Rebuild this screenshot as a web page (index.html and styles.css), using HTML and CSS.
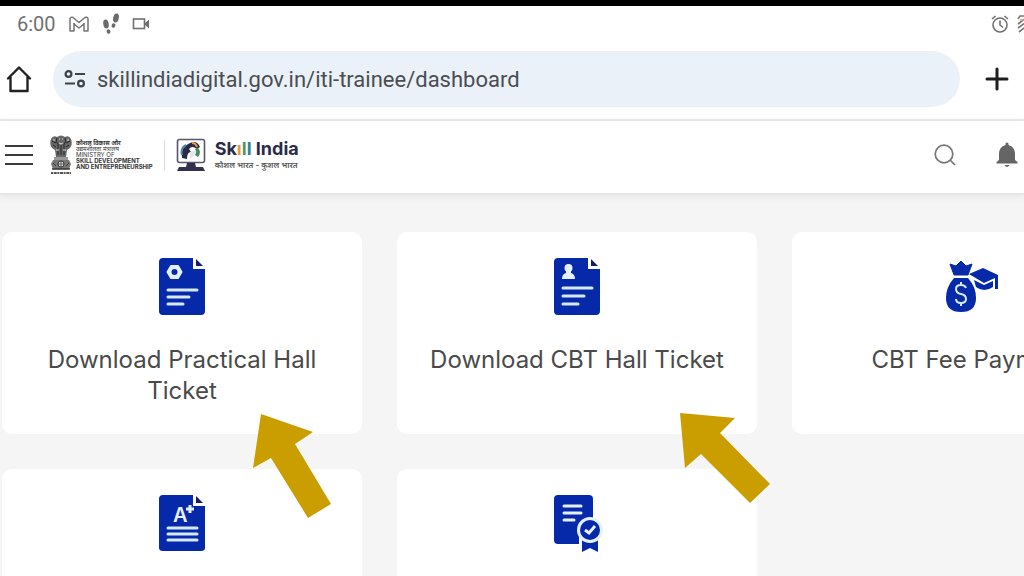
FILE: index.html
```html
<!DOCTYPE html>
<html lang="en">
<head>
    <meta charset="utf-8">
    <meta name="viewport" content="width=device-width, initial-scale=1">
    <title>ITI Trainee Dashboard</title>
    <link rel="stylesheet" href="styles.css">
</head>

<body>
    <div class="status-bar">
        <span class="clock">6:00</span>
        <svg class="mail" width="22" height="18" viewBox="0 0 22 18" fill="none" stroke="#757575" stroke-width="1.5" stroke-linejoin="round"><path d="M2 16V3.5Q3 1.5 5 2.5L11 7.5L17 2.5Q19 1.5 20 3.5V16H16V9L11 13L6 9V16Z"/><path d="M6 8V9M16 8V9"/></svg>
        <svg class="steps" width="18" height="22" viewBox="0 0 18 22" fill="#6b6b6b"><ellipse cx="4" cy="11" rx="2.700" ry="4.500" transform="rotate(-10 4 11)"/><ellipse cx="6.500" cy="18.500" rx="1.900" ry="2.300" transform="rotate(-15 6.500 18.500)"/><ellipse cx="14" cy="5" rx="2.800" ry="4.500" transform="rotate(12 14 5)"/><ellipse cx="11.500" cy="12.500" rx="1.900" ry="2.300" transform="rotate(15 11.500 12.500)"/></svg>
        <svg class="video" width="18" height="12" viewBox="0 0 18 12"><rect x="1.500" y="1" width="11" height="9.500" fill="none" stroke="#707070" stroke-width="1.600"/><path d="M13 5L17 1.500V10.500L13 7Z" fill="#707070"/></svg>
        <svg class="alarm" width="18" height="18" viewBox="0 0 18 18" fill="none" stroke="#707070" stroke-width="1.600"><circle cx="9" cy="10" r="7"/><path d="M9 5.500V10L12 12.500M1 4L4.500 1M17 4L13.500 1"/></svg>
        <svg class="signal" width="18" height="18" viewBox="0 0 18 18" fill="none" stroke="#777" stroke-width="1.600"><path d="M1 4L3 1H9M1 9L9 3M1 13L12 5M2 17L16 6M8 17L17 11"/><path d="M3 5L9 5" stroke="#c9a58f"/></svg>
    </div>

    <div class="address-bar">
        <button type="button" class="icon-btn" aria-label="Home">
            <svg width="26" height="28" viewBox="0 0 26 28" fill="none" stroke="#222" stroke-width="2.400" stroke-linejoin="round" stroke-linecap="round"><path d="M2 13.500L13 2.500L24 13.500M4.500 12V26H21.500V12"/></svg>
        </button>
        <div class="url-box">
            <svg width="22" height="18" viewBox="0 0 22 18" fill="none" stroke="#3f4347" stroke-width="2.200"><circle cx="4.500" cy="4" r="2.900"/><path d="M11 4H21M1 13.500H11"/><circle cx="17" cy="13.500" r="2.900"/></svg>
            <input type="text" class="url" aria-label="Address" value="skillindiadigital.gov.in/iti-trainee/dashboard">
        </div>
        <button type="button" class="icon-btn" aria-label="New tab">
            <svg width="24" height="24" viewBox="0 0 24 24" stroke="#1d1d1d" stroke-width="3" stroke-linecap="round"><path d="M12 2V22M2 12H22"/></svg>
        </button>
    </div>

    <header class="site-header">
        <button type="button" class="icon-btn" aria-label="Menu">
            <svg width="28" height="22" viewBox="0 0 28 22" stroke="#3c3c3c" stroke-width="2.200"><path d="M0 2H28M0 11H28M0 20H28"/></svg>
        </button>
        <a href="#" class="ministry">
            <svg width="24" height="40" viewBox="0 0 24 40">
                <path d="M2 4Q4 0 8 2Q12 -1 16 2Q20 0 22 4Q24 9 21 13L18 15L17 22H7L6 15L3 13Q0 9 2 4Z" fill="#686868"/>
                <path d="M8 3Q6 7 9 9V20M16 3Q18 7 15 9V20M3 6L7 8M21 6L17 8M4 10L7 12M20 10L17 12M12 10V20" stroke="#222" fill="none"/>
                <path d="M10 4H11M13 4H14M10 8Q12 10 14 8M5 4V6M19 4V6M7 15H10M14 15H17" stroke="#ddd" fill="none"/>
                <path d="M5 22H19V25H5Z" fill="#999"/>
                <path d="M4 25H20L22 29L20 34H4L2 29Z" fill="#777"/>
                <circle cx="12" cy="29" r="3" fill="#eee" stroke="#333"/>
                <path d="M12 26V32M9 29H15M4 28L7 31M20 28L17 31" stroke="#333" stroke-width=".8"/>
                <path d="M3 34H21" stroke="#333" stroke-width="1.500"/>
                <path d="M2 38H22" stroke="#555" stroke-width="2" stroke-dasharray="2 .7 3 .6"/>
            </svg>
            <span class="ministry-name">
                <b>कौशल विकास और</b>
                <span>उद्यमशीलता मंत्रालय</span>
                <span>MINISTRY OF</span>
                <b>SKILL DEVELOPMENT</b>
                <b>AND ENTREPRENEURSHIP</b>
            </span>
        </a>
        <a href="#" class="skill-india">
            <svg width="30" height="34" viewBox="0 0 30 34">
                <rect x="1.500" y="1.500" width="27" height="23" rx="2" fill="#fff" stroke="#57566b" stroke-width="1.600"/>
                <path d="M6 20Q4 9 14 5Q21 2 24 9L21 11Q16 7 13 11L15 14Q11 14 11 21Z" fill="#292c49"/>
                <path d="M6 17Q4 10 10 7" fill="none" stroke="#4d89ad" stroke-width="2"/>
                <path d="M16 5Q20 5 21 9" fill="none" stroke="#e69b42" stroke-width="2"/>
                <path d="M22 10Q26 14 22 19L19 17Q21 14 19 11Z" fill="#458b5c"/>
                <path d="M14 14L20 12L18 18L14 21Z" fill="#e4e4ee"/>
                <path d="M11 25H19L20 29H27L29 33H1L3 29H10Z" fill="#32304f"/>
            </svg>
            <span class="brand">
                <span class="brand-name">Sk<span class="orange">ı</span><span class="green">l</span><span class="teal">l</span> India</span>
                <span class="brand-hindi">कौशल भारत - कुशल भारत</span>
            </span>
        </a>
        <div class="header-actions">
            <button type="button" class="icon-btn" aria-label="Search">
                <svg width="22" height="22" viewBox="0 0 22 22" fill="none" stroke="#777" stroke-width="1.700"><circle cx="10" cy="10" r="8.800"/><path d="M16 16L21 21"/></svg>
            </button>
            <button type="button" class="icon-btn" aria-label="Notifications">
                <svg width="22" height="26" viewBox="0 0 22 26" fill="#656565"><path d="M9.500 3V1.500Q11 -.5 12.500 1.500V3Q19 5 19 12V18L21.500 20V21.500H.5V20L3 18V12Q3 5 9.500 3ZM8.500 23H13.500Q11 27 8.500 23Z"/></svg>
            </button>
        </div>
    </header>

    <main class="dashboard">
        <a href="#" class="card">
            <svg width="46" height="58" viewBox="0 0 46 58">
                <path d="M4 0H34V11H46V53Q46 57 42 57H4Q0 57 0 53V4Q0 0 4 0Z" fill="#0629a9"/>
                <path d="M37 1V8H44Z" fill="#171c66"/>
                <path d="M12 8H19L22.500 14L19 20H12L8.500 14Z" fill="#e6f1ff" stroke="#e6f1ff" stroke-width="2" stroke-linejoin="round"/>
                <circle cx="15.500" cy="14" r="3" fill="#0629a9"/>
                <path d="M9 32H38M9 39H30M9 46H24" stroke="#d6e9ff" stroke-width="3" stroke-linecap="round"/>
            </svg>
            <h2>Download Practical Hall Ticket</h2>
            <!-- pointer arrow -->
            <svg class="arrow arrow-left" width="80" height="106" viewBox="0 0 80 106"><path d="M9 1L61 19L43 31L79 91L56 105L19 45L1 55Z" fill="#cb9e00"/></svg>
        </a>
        <a href="#" class="card">
            <svg width="46" height="58" viewBox="0 0 46 58">
                <path d="M4 0H34V11H46V53Q46 57 42 57H4Q0 57 0 53V4Q0 0 4 0Z" fill="#0629a9"/>
                <path d="M37 1V8H44Z" fill="#171c66"/>
                <circle cx="14.500" cy="10" r="4" fill="#e6f1ff"/>
                <path d="M12 12H17V15Q21 16 21 21H8Q8 16 12 15Z" fill="#e6f1ff"/>
                <path d="M9 30H38M9 38H30M9 46H24" stroke="#d6e9ff" stroke-width="3" stroke-linecap="round"/>
            </svg>
            <h2>Download CBT Hall Ticket</h2>
            <svg class="arrow arrow-right" width="92" height="92" viewBox="0 0 92 92"><path d="M1 1L56 6L41 21L91 72L71 91L22 42L6 56Z" fill="#cb9e00"/></svg>
        </a>
        <a href="#" class="card">
            <svg width="52" height="58" viewBox="0 0 52 58">
                <path d="M4 6L10 8L15 3L20 8L26 6L22 17H8Z" fill="#0629a9" stroke="#0629a9" stroke-linejoin="round"/>
                <path d="M8 20H22Q30 29 30 40Q30 54 15 54Q0 54 0 40Q0 29 8 20Z" fill="#0629a9"/>
                <path d="M20 30Q19 27 15 27Q10 27 10 31Q10 35 15 36Q20 37 20 41Q20 45 15 45Q10 45 10 41M15 24V27M15 45V48" fill="none" stroke="#d6e9ff" stroke-width="2"/>
                <path d="M23 16L37 10L52 17V31H49V20L38 25Z" fill="#0629a9"/>
                <path d="M28 22L38 27L47 23V29Q38 35 30 29Z" fill="#0629a9"/>
            </svg>
            <h2>CBT Fee Payment</h2>
        </a>
        <a href="#" class="card" aria-label="Results">
            <svg width="46" height="58" viewBox="0 0 46 58">
                <path d="M4 0H34V11H46V53Q46 56 42 56H4Q0 56 0 53V4Q0 0 4 0Z" fill="#0629a9"/>
                <path d="M37 1V8H44Z" fill="#171c66"/>
                <text class="grade" x="14" y="27">A</text>
                <path d="M31 10V18M27 14H35" stroke="#e6f1ff" stroke-width="3"/>
                <path d="M9 33H38M9 39H38M9 45H38" stroke="#d6e9ff" stroke-width="3" stroke-linecap="round"/>
            </svg>
        </a>
        <a href="#" class="card" aria-label="Certificates">
            <svg width="46" height="58" viewBox="0 0 46 58">
                <path d="M4 0H35Q39 0 39 4V49H4Q0 49 0 45V4Q0 0 4 0Z" fill="#0629a9"/>
                <path d="M10 11H27M10 18H27M10 25H20" stroke="#e6f1ff" stroke-width="3" stroke-linecap="round"/>
                <path d="M25 42H46V59H25Z" fill="#fff"/>
                <path d="M28 45H44V57L36 53L28 57Z" fill="#0629a9"/>
                <circle cx="36" cy="35" r="13" fill="#e6f1ff"/>
                <circle cx="36" cy="35" r="10" fill="#0629a9"/>
                <path d="M31 35L35 38L41 31" fill="none" stroke="#e6f1ff" stroke-width="3"/>
            </svg>
        </a>
    </main>
</body>
</html>
```

FILE: styles.css
```css
* {
    box-sizing: border-box;
}
body {
    margin: 0;
    background-color: #f5f5f5;
    border-top: 6px solid #000;
    font-family: Inter, "Noto Sans", sans-serif;
    color: #444;
    overflow: hidden;
}
svg {
    flex-shrink: 0;
    overflow: visible;
}
a {
    color: inherit;
    text-decoration: none;
}

/* Phone status bar */
.status-bar {
    display: flex;
    align-items: center;
    height: 36px;
    padding-left: 17px;
    background-color: #fff;
}
.clock {
    font-family: Roboto, sans-serif;
    font-size: 20px;
    color: #707070;
}
.mail,
.steps,
.video {
    margin-left: 12px;
}
.alarm {
    margin-left: auto;
}
.signal {
    margin-left: 8px;
    margin-right: -11px;
}

/* Browser address bar */
.address-bar {
    display: flex;
    align-items: center;
    padding: 9px 15px 12px 6px;
    background-color: #fff;
    border-bottom: 2px solid #e9e9e9;
}
.icon-btn {
    display: flex;
    padding: 0;
    border: none;
    background: none;
    cursor: pointer;
}
.url-box {
    display: flex;
    flex: 1;
    align-items: center;
    height: 56px;
    margin: 0 25px 0 21px;
    padding: 0 11px;
    border-radius: 28px;
    background-color: #ebf1f9;
}
.url {
    flex: 1;
    min-width: 0;
    margin-left: 11px;
    padding: 0;
    border: none;
    outline: none;
    background: none;
    font-family: Roboto, sans-serif;
    font-size: 22px;
    color: #4a4d52;
}

/* Site header */
.site-header {
    display: flex;
    align-items: center;
    height: 74px;
    padding: 0 6px 4px 5px;
    background-color: #fff;
    border-bottom: 2px solid #e6e6e6;
    box-shadow: 0 2px 8px rgba(0, 0, 0, 0.06);
}
.ministry {
    display: flex;
    align-items: center;
    height: 30px;
    margin-left: 16px;
    padding-right: 11px;
    border-right: 1px solid #ddd;
}
.ministry-name {
    display: flex;
    flex-direction: column;
    margin-left: 3px;
    font-size: 6px;
    line-height: 6px;
    white-space: nowrap;
    color: #333;
}
.skill-india {
    display: flex;
    align-items: center;
    margin-left: 11px;
}
.brand {
    display: flex;
    flex-direction: column;
    margin-left: 9px;
    white-space: nowrap;
}
.brand-name {
    font-size: 18px;
    line-height: 20px;
    font-weight: 700;
    color: #2c2b4a;
}
.orange {
    color: #e89a3c;
}
.green {
    color: #4a9b5a;
}
.teal {
    color: #2f7f95;
}
.brand-hindi {
    font-size: 8px;
    line-height: 12px;
    font-weight: 600;
    color: #555;
}
.header-actions {
    display: flex;
    align-items: center;
    gap: 40px;
    margin-left: auto;
}

/* Dashboard cards */
.dashboard {
    display: grid;
    grid-template-columns: repeat(3, minmax(360px, 1fr));
    grid-auto-rows: minmax(202px, auto);
    gap: 35px;
    padding: 37px 2px;
}
.card {
    position: relative;
    display: flex;
    flex-direction: column;
    align-items: center;
    padding: 26px 30px;
    border-radius: 10px;
    background-color: #fff;
}
.card h2 {
    margin: 28px 0 0;
    font-size: 24px;
    line-height: 31px;
    font-weight: 400;
    text-align: center;
    color: #4a4a4a;
}
.grade {
    font-size: 20px;
    font-weight: 600;
    fill: #e6f1ff;
}
.arrow {
    position: absolute;
    z-index: 1;
}
.arrow-left {
    top: 181px;
    left: 250px;
}
.arrow-right {
    top: 180px;
    left: 282px;
}
```
